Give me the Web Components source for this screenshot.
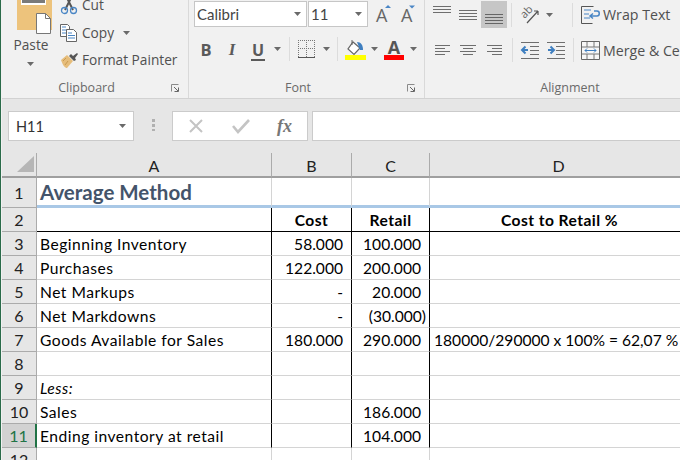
<!doctype html>
<html><head><meta charset="utf-8">
<style>
html,body{margin:0;padding:0;background:#fff}
body{width:680px;height:460px;overflow:hidden;font-family:"Open Sans","Liberation Sans",sans-serif}
</style></head><body>
<x-app>
 <x-ribbon>
  <x-rgroup label="Clipboard" style="width:186px;margin-left:0">
   <x-row style="height:78px;align-items:flex-start">
    <x-paste></x-paste>
    <x-stack style="margin-left:2px;margin-top:-9px">
     <x-row style="height:28px"><x-icon name="cut"></x-icon><x-label style="margin-left:4px">Cut</x-label></x-row>
     <x-row style="height:27px"><x-icon name="copy"></x-icon><x-label style="margin-left:4px">Copy</x-label><x-icon name="caret" style="margin-left:9px"></x-icon></x-row>
     <x-row style="height:27px"><x-icon name="painter" style="margin-right:-1px"></x-icon><x-label style="margin-left:4px">Format Painter</x-label></x-row>
    </x-stack>
   </x-row>
  </x-rgroup>
  <x-rgroup label="Font" style="width:235px">
   <x-row style="height:26px;margin-top:1px;margin-left:5px">
    <x-select value="Calibri" style="width:113px"></x-select>
    <x-select value="11" style="width:60px;margin-left:1px"></x-select>
    <x-icon name="growA" style="margin-left:8px"></x-icon>
    <x-icon name="shrinkA" style="margin-left:9px"></x-icon>
   </x-row>
   <x-row style="height:24px;margin-top:10px;margin-left:4px">
    <x-fmt kind="b">B</x-fmt><x-fmt kind="i">I</x-fmt><x-fmt kind="u">U</x-fmt>
    <x-icon name="caret" style="margin-left:3px"></x-icon>
    <x-icon name="sep" style="margin-left:8px"></x-icon>
    <x-icon name="borders" style="margin-left:8px"></x-icon>
    <x-icon name="caret" style="margin-left:8px"></x-icon>
    <x-icon name="sep" style="margin-left:7px"></x-icon>
    <x-icon name="fill" style="margin-left:7px"></x-icon>
    <x-icon name="caret" style="margin-left:5px"></x-icon>
    <x-color-a style="margin-left:6px">A</x-color-a>
    <x-icon name="caret" style="margin-left:6px"></x-icon>
   </x-row>
  </x-rgroup>
  <x-rgroup label="Alignment" style="width:307px">
   <x-row style="height:27px;margin-top:1px;margin-left:8px">
    <x-icon name="vtop"></x-icon>
    <x-icon name="vmid" style="margin-left:8px"></x-icon>
    <x-icon name="vbot" style="margin-left:4px"></x-icon>
    <x-icon name="sep" style="margin-left:4px"></x-icon>
    <x-icon name="orient" style="margin-left:7px"></x-icon>
    <x-icon name="caret" style="margin-left:6px"></x-icon>
    <x-icon name="sep" style="margin-left:19px"></x-icon>
    <x-icon name="wrap" style="margin-left:8px"></x-icon>
    <x-label style="margin-left:3px;font-size:14.200px">Wrap Text</x-label>
   </x-row>
   <x-row style="height:24px;margin-top:10px;margin-left:10px">
    <x-icon name="aleft"></x-icon>
    <x-icon name="acenter" style="margin-left:10px"></x-icon>
    <x-icon name="aright" style="margin-left:11px"></x-icon>
    <x-icon name="sep" style="margin-left:10px"></x-icon>
    <x-icon name="outdent" style="margin-left:8px"></x-icon>
    <x-icon name="indent" style="margin-left:8px"></x-icon>
    <x-icon name="sep" style="margin-left:8px"></x-icon>
    <x-icon name="merge" style="margin-left:7px"></x-icon>
    <x-label style="margin-left:3px;margin-top:2px;font-size:14.200px;white-space:nowrap">Merge &amp; Center</x-label>
   </x-row>
  </x-rgroup>
 </x-ribbon>
 <x-formula-bar></x-formula-bar>
 <x-sheet></x-sheet>
</x-app>
<script>
const lines=(w,ys,x0=0,x1=w,c='#6e6e6e')=>ys.map(y=>`<rect x="${x0}" y="${y}" width="${x1-x0}" height="1" fill="${c}"/>`).join('');
const ICONS={
 caret:[7,4,`<path d="M0 0h7L3.5 4z" fill="#6a6a6a"/>`],
 sep:[1,24,`<rect width="1" height="24" fill="#dcdcdc"/>`],
 launcher:[8,8,`<path d="M.5 7.5V.5h7" fill="none" stroke="#8a8a8a"/><path d="M3 3l4 4M7.500 3.500v4h-4" fill="none" stroke="#666"/>`],
 cut:[18,20,`<path d="M5 12L11 0M13 12L7 0" stroke="#555" stroke-width="2" fill="none" transform="translate(0,3)"/><circle cx="4.500" cy="15.500" r="3" fill="none" stroke="#4a86c5" stroke-width="1.300"/><circle cx="13.500" cy="15.500" r="3" fill="none" stroke="#4a86c5" stroke-width="1.300"/>`],
 copy:[18,18,`<path d="M.5.5h7l2 2v10H.5z" fill="#fff" stroke="#666"/><path d="M2 3h4M2 6h5M2 9h5" stroke="#4a86c5"/><path d="M6.500 5.500h7l3 3v9h-10z" fill="#fff" stroke="#666"/><path d="M8 9h4M8 11.500h7M8 14h7" stroke="#4a86c5"/>`],
 painter:[19,18,`<path d="M1 9l6-5 6 6-6 7C5 17 3 15 1 9z" fill="#e6bd7b"/><path d="M5 14l3-4M3 10l3-3" stroke="#c99a50"/><path d="M9 5l2-2 2 2 4-3 1 1-3 4 1 2-2 1z" fill="#555"/>`],
 growA:[15,23,`<text x="0" y="18.500" font-family="Open Sans,sans-serif" font-size="18" fill="#666">A</text><path d="M9 5l3-3 3 3z" fill="#4a86c5"/>`],
 shrinkA:[16,23,`<text x="1" y="18.500" font-family="Open Sans,sans-serif" font-size="18" fill="#666">A</text><path d="M9 2.500h6l-3 3z" fill="#4a86c5"/>`],
 borders:[17,18,`<path d="M0 .5h17M0 8.500h17M.5 0v17M8.500 0v17M16.500 0v17" fill="none" stroke="#777" stroke-dasharray="1 1"/><rect y="17" width="17" height="1" fill="#555"/>`],
 fill:[21,24,`<path d="M8 5l7 6-6 6.500-6-5.500z" fill="#fff" stroke="#666" stroke-width="1.200"/><path d="M7 3v5" stroke="#666"/><path d="M12 5c4 0 6 3 6 8h-3z" fill="#3f7fc0"/><rect y="18" width="21" height="5" fill="#ffff00"/>`],
 vtop:[18,27,lines(18,[5,8,11])],
 vmid:[18,27,lines(18,[9,12,15,18])],
 vbot:[26,27,`<rect width="26" height="27" fill="#c6c6c6"/>`+lines(18,[13,16,19,22],4,22,'#666')],
 orient:[21,21,`<text x="0" y="3.500" text-anchor="middle" font-family="Open Sans,sans-serif" font-size="11" fill="#666" transform="translate(7.500,8) rotate(-45)">ab</text><path d="M8 19L19 7M19 7h-4M19 7v4" stroke="#555" stroke-width="1.200" fill="none"/>`],
 wrap:[19,19,`<path d="M12.500 1.500H.5v17h11" fill="none" stroke="#555"/><path d="M3 5h7M3 9h5M3 13h6" stroke="#4a86c5"/><path d="M10 11h6c3 0 3-5 0-5h-3M12 8.500l-3 2.500 3 2.500" stroke="#4a86c5" stroke-width="1.500" fill="none"/>`],
 aleft:[15,11,lines(15,[0,6])+lines(15,[3,9],0,10)],
 acenter:[16,11,lines(16,[0,6])+lines(16,[3,9],3,13)],
 aright:[15,11,lines(15,[0,6])+lines(15,[3,9],5,15)],
 outdent:[18,17,lines(18,[0,16],0,18)+lines(18,[4,8,12],9,18)+`<path d="M7 8H2M4.500 4.500L1 8l3.500 3.500" stroke="#3f7fc0" stroke-width="2" fill="none"/>`],
 indent:[18,17,lines(18,[0,16],0,18)+lines(18,[4,8,12],9,18)+`<path d="M1 8h5M3.500 4.500L7 8l-3.500 3.500" stroke="#3f7fc0" stroke-width="2" fill="none"/>`],
 merge:[19,19,`<path d="M.5.500h18v18H.5z" fill="#f7f7f7" stroke="#666"/><path d="M1 6h17M1 13h17M6 1v5M13 1v5M6 13v5M13 13v5" stroke="#777"/><path d="M4 9.500h11M6 7.500l-2 2 2 2M13 7.500l2 2-2 2" stroke="#3f7fc0" fill="none"/>`]
};
function def(name,css,html){
 customElements.define(name,class extends HTMLElement{
  connectedCallback(){
   if(this.shadowRoot)return;
   const r=this.attachShadow({mode:'open'});
   r.innerHTML=`<style>${css}</style>`+(typeof html==='function'?html(this):html);
  }
 });
}
const UI='"Open Sans","Liberation Sans",sans-serif';
const CAL='Lato,"Liberation Sans",sans-serif';
def('x-app',`:host{display:flex;flex-direction:column;width:680px;height:460px;overflow:hidden;box-sizing:border-box;border-left:1px solid #2b6b4a;padding-left:1px;background:#f1f1f1}`,`<slot></slot>`);
def('x-ribbon',`:host{display:flex;flex:none;height:98px;background:#f1f1f1;border-bottom:1px solid #d2d2d2;overflow:hidden}`,`<slot></slot>`);
def('x-rgroup',`:host{display:flex;flex:none;flex-direction:column;height:98px;border-right:1px solid #d9d9d9;overflow:hidden}
 .c{flex:none;height:78px;overflow:hidden}
 .l{flex:none;height:20px;display:flex;align-items:center}
 .t{flex:1;text-align:center;font:12.500px ${UI};color:#6a6a6a;line-height:20px}
 .d{width:17px;display:flex}`,
 h=>`<div class="c"><slot></slot></div><div class="l"><div class="t">${h.getAttribute('label')}</div><div class="d"><x-icon name="launcher"></x-icon></div></div>`);
def('x-row',`:host{display:flex;align-items:center;white-space:nowrap}`,`<slot></slot>`);
def('x-stack',`:host{display:flex;flex-direction:column}`,`<slot></slot>`);
def('x-label',`:host{display:block;font:13.700px ${UI};color:#505050;line-height:20px}`,`<slot></slot>`);
def('x-icon',`:host{display:block;flex:none;line-height:0}svg{display:block;overflow:visible}`,h=>{const i=ICONS[h.getAttribute('name')];return `<svg width="${i[0]}" height="${i[1]}" viewBox="0 0 ${i[0]} ${i[1]}">${i[2]}</svg>`});
def('x-paste',`:host{display:flex;flex-direction:column;align-items:center;width:56px;flex:none}
 svg{display:block}
 .t{font:13.700px ${UI};color:#505050;line-height:20px;margin-top:1px;margin-left:2px}
 x-icon{margin-top:7px}`,
 `<svg width="56" height="34" viewBox="0 0 56 34"><rect x="15" y="0" width="35" height="30" fill="#edc37c"/><rect x="19" y="0" width="25" height="5" fill="#fff"/><rect x="20" y="0" width="23" height="3" fill="#7a7a7a"/><path d="M34.500 13.500h9l5 5v15h-14z" fill="#fff" stroke="#777"/><path d="M43.500 13.500v5h5" fill="none" stroke="#777"/></svg><div class="t">Paste</div><x-icon name="caret"></x-icon>`);
def('x-select',`:host{display:flex;flex:none;align-items:center;box-sizing:border-box;height:26px;background:#fff;border:1px solid #c6c6c6}
 .v{flex:1;padding-left:2px;font:15px ${CAL};color:#444}
 x-icon{margin-right:5px}`,h=>`<div class="v">${h.getAttribute('value')}</div><x-icon name="caret"></x-icon>`);
def('x-fmt',`:host{display:block;flex:none;width:26px;text-align:center;color:#5a5a5a;padding-top:2px}
 :host([kind=b]){font:700 16.500px/24px ${UI}}
 :host([kind=i]){font:italic 700 17px/24px "Liberation Serif",serif}
 :host([kind=u]){font:700 16px/24px ${UI}}
 span{display:inline-block}
 :host([kind=u]) span{border-bottom:2px solid #5a5a5a;line-height:17px;padding:0 1px}`,`<span><slot></slot></span>`);
def('x-color-a',`:host{display:flex;flex:none;flex-direction:column;align-items:center;width:20px;height:24px;padding-top:3px;box-sizing:border-box;font:700 18px/15px ${UI};color:#555}
 i{display:block;width:20px;height:5px;background:#ff0000}
 span{display:block;height:15px}`,`<span><slot></slot></span><i></i>`);
def('x-formula-bar',`:host{display:flex;flex:none;align-items:stretch;height:42px;padding-top:12px;background:#e6e6e6}
 .box{box-sizing:border-box;height:30px;background:#fff;border:1px solid #cbcbcb;display:flex;align-items:center}
 .name{width:126px;margin-left:6px;padding-left:7px;font:14.500px ${CAL};color:#333}
 .name span{flex:1}.name x-icon{margin-right:7px}
 .dots{width:3px;margin:8px 17px 0 18px;height:12px;background:repeating-linear-gradient(#b0b0b0 0 3px,transparent 3px 5px)}
 .fb{width:136px;justify-content:flex-start}
 .fb svg{display:block}
 .fx{font:italic 700 18px "Liberation Serif",serif;color:#777;margin-left:27px}
 .in{flex:1;margin-left:4px;border-right:none}`,
 `<div class="box name"><span>H11</span><x-icon name="caret"></x-icon></div><div class="dots"></div>
 <div class="box fb"><svg style="margin-left:15px" width="16" height="16" viewBox="0 0 16 16"><path d="M2 2l12 12M14 2L2 14" stroke="#c4c4c4" stroke-width="2"/></svg><svg style="margin-left:28px" width="18" height="16" viewBox="0 0 18 16"><path d="M1 8l5 6L17 2" stroke="#c4c4c4" stroke-width="2.600" fill="none"/></svg><span class="fx">fx</span></div>
 <div class="box in"></div>`);
const ROWS=[
 [1,'Average Method','','',''],
 [2,'','Cost','Retail','Cost to Retail %'],
 [3,'Beginning Inventory','58.000','100.000',''],
 [4,'Purchases','122.000','200.000',''],
 [5,'Net Markups','-','20.000',''],
 [6,'Net Markdowns','-','(30.000)',''],
 [7,'Goods Available for Sales','180.000','290.000','180000/290000 x 100% = 62,07 %'],
 [8,'','','',''],
 [9,'Less:','','',''],
 [10,'Sales','','186.000',''],
 [11,'Ending inventory at retail','','104.000',''],
 [12,'','','','']
];
def('x-sheet',`:host{display:grid;flex:none;width:700px;background:#fff;font:15.600px/1 ${CAL};color:#000;
  grid-template-columns:35px 235px 80px 78px 258px;grid-template-rows:25px 30px repeat(11,24px);overflow:hidden;height:307px}
 .c{box-sizing:border-box;display:flex;align-items:center;white-space:nowrap;overflow:hidden;border-right:1px solid #d4d4d4;border-bottom:1px solid #d4d4d4;padding:2px 3px 0 3px}
 .h{background:#e6e6e6;justify-content:center;font-size:16px;color:#222;padding:1px 0 0}
 .ch{border-right:1px solid #ababab;border-bottom:2px solid #9f9f9f;padding-top:2px}
 .rh{border-right:1px solid #ababab;border-bottom:1px solid #ababab}
 .sel{background:#d2d2d2;color:#217346;border-right:2px solid #217346}
 .corner{background:#e6e6e6;border-right:1px solid #ababab;border-bottom:2px solid #9f9f9f;box-sizing:border-box;padding:3px 0 0 15px}
 .corner svg{display:block}
 .blue{border-bottom:3px solid #a9c8e6}
 .bk{border-right-color:#000}
 .bb{border-bottom-color:#000}
 .r{justify-content:flex-end;padding-right:8px}
 .cen{justify-content:center}
 .b{font-weight:700;letter-spacing:.45px}
 .d{padding-left:4px;border-right:none}
 .lab{letter-spacing:.5px}
 .title{font-size:20.500px;font-weight:700;color:#44546a;padding:2px 3px 0;letter-spacing:0}
 .i{font-style:italic}
 .paren{padding-right:3px}`,
 ()=>{
  let s=`<div class="corner"><svg width="17" height="17" viewBox="0 0 17 17"><path d="M17 0v16H0z" fill="#b6b6b6"/></svg></div>`;
  ['A','B','C','D'].forEach(x=>s+=`<div class="c h ch">${x}</div>`);
  ROWS.forEach(r=>{
   const n=r[0],mid=n>=2&&n<=11;
   s+=`<div class="c h rh${n==11?' sel':''}">${n}</div>`;
   const bot=n==1?' blue':n==2?' bb':'';
   const k=mid?' bk':'';
   s+=`<div class="c lab${bot}${k}${n==1?' title':''}${n==9?' i':''}">${r[1]}</div>`;
   const head=n==2;
   s+=`<div class="c${bot}${k} ${head?'cen b':'r'}">${r[2]}</div>`;
   s+=`<div class="c${bot}${k} ${head?'cen b':'r'}${r[3].startsWith('(')?' paren':''}">${r[3]}</div>`;
   s+=`<div class="c d${bot} ${head?'cen b':''}">${r[4]}</div>`;
  });
  return s;
 });
</script>
</body></html>
